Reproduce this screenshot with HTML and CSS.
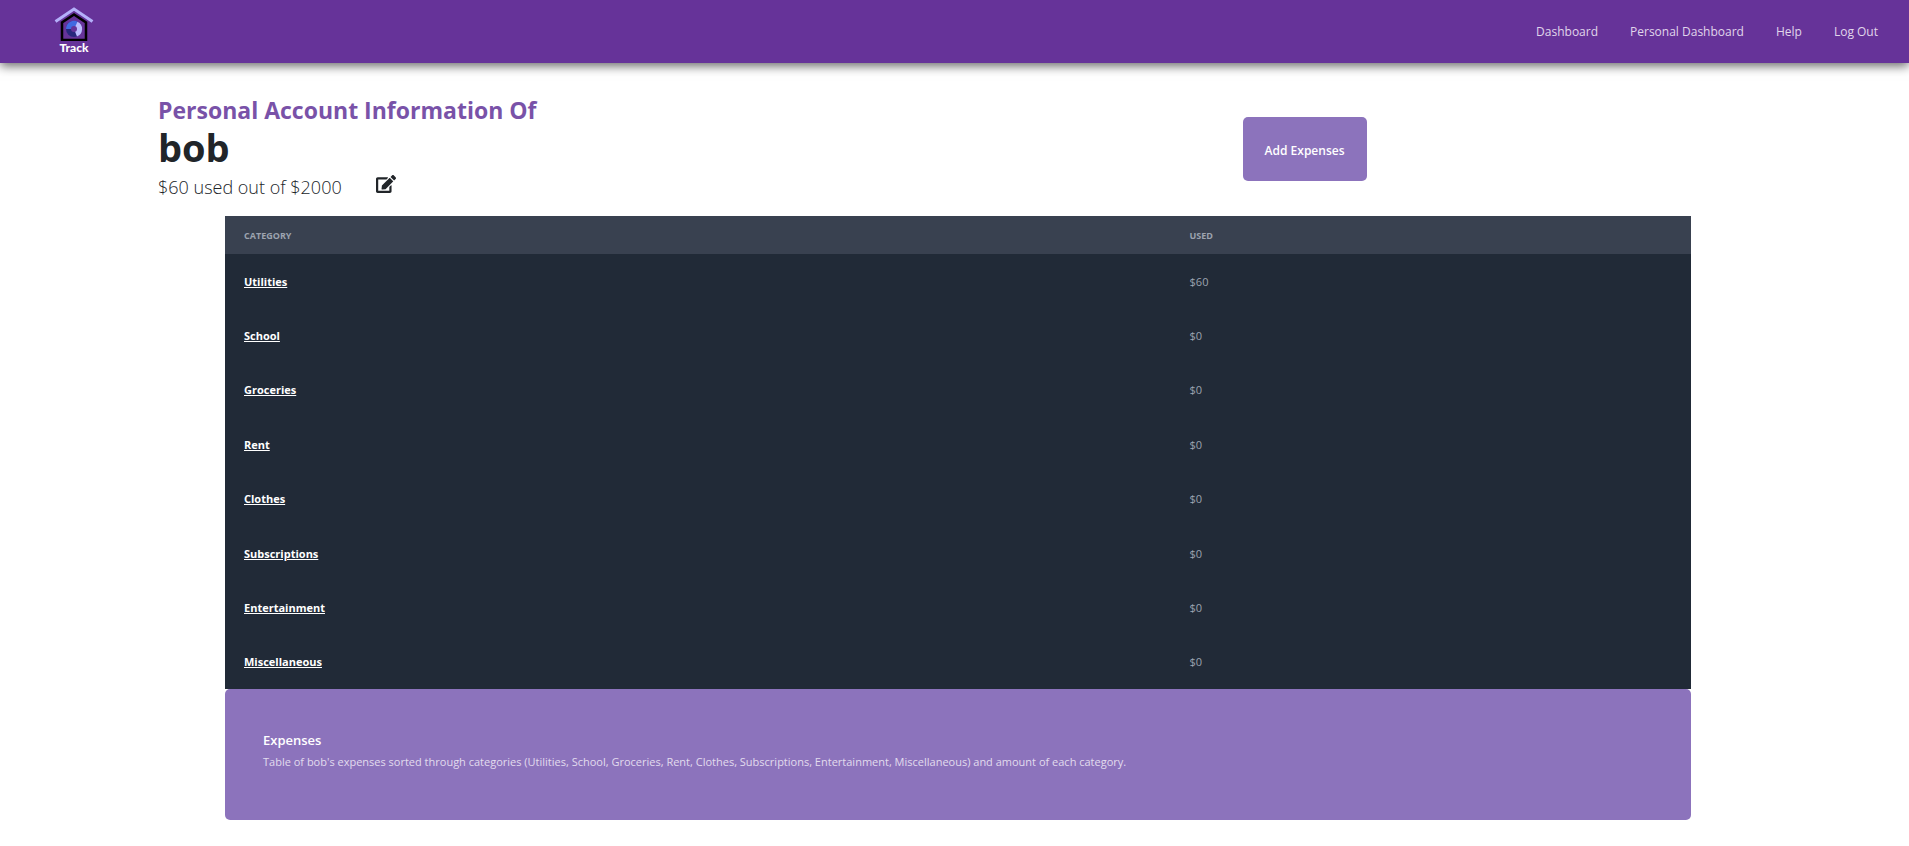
FILE: index.html
```html
<!DOCTYPE html>
<html lang="en">
<head>
    <meta charset="UTF-8">
    <meta name="viewport" content="width=device-width, initial-scale=1.0">
    <title>Track</title>
    <link rel="stylesheet" href="styles.css">
</head>
<body>
    <nav class="navbar">
        <a class="logo" href="#" aria-label="Track home">
            <svg width="40" height="36" viewBox="0 0 40 36" aria-hidden="true">
                <path d="M1.500 16.500 L20 4 L38.500 16.500" fill="none" stroke="#b4b0fa" stroke-width="3"/>
                <path d="M8 35 V17.500 L20 9.500 L32 17.500 V35 Z" fill="none" stroke="#000" stroke-width="2.500"/>
                <circle cx="20" cy="24" r="8" fill="#28287d"/>
                <path d="M20 24 L12 24 A8 8 0 0 1 24 17 Z" fill="#4169e1"/>
                <path d="M20 24 L23.500 16.800 A8 8 0 0 1 23 31.500 Z" fill="#bcbcff"/>
                <circle cx="20" cy="24" r="3" fill="#663399"/>
            </svg>
            <span class="logo-text">Track</span>
        </a>
        <ul class="nav-links">
            <li><a href="#">Dashboard</a></li>
            <li><a href="#">Personal Dashboard</a></li>
            <li><a href="#">Help</a></li>
            <li><a href="#">Log Out</a></li>
        </ul>
    </nav>

    <header class="account">
        <div class="account-info">
            <h2>Personal Account Information Of</h2>
            <h1>bob</h1>
            <div class="budget">
                <p>$60 used out of $2000</p>
                <button class="edit" aria-label="Edit budget">
                    <svg width="20" height="18" viewBox="0 0 576 512" aria-hidden="true">
                        <path fill="currentColor" d="M402.600 83.200l90.200 90.200c3.800 3.800 3.800 10 0 13.800L274.400 405.600l-92.800 10.300c-12.400 1.400-22.900-9.100-21.500-21.500l10.300-92.800L388.800 83.200c3.800-3.800 10-3.800 13.800 0zm162-22.900l-48.800-48.800c-15.200-15.200-39.900-15.200-55.200 0l-35.400 35.400c-3.800 3.800-3.800 10 0 13.800l90.200 90.200c3.800 3.800 10 3.800 13.800 0l35.400-35.400c15.200-15.300 15.200-40 0-55.200zM384 346.200V448H64V128h229.800c3.200 0 6.200-1.300 8.500-3.500l40-40c7.600-7.600 2.200-20.500-8.500-20.500H48C21.500 64 0 85.500 0 112v352c0 26.500 21.500 48 48 48h352c26.500 0 48-21.500 48-48V306.200c0-10.700-12.900-16-20.500-8.500l-40 40c-2.200 2.300-3.500 5.300-3.500 8.500z"/>
                    </svg>
                </button>
            </div>
        </div>
        <button class="add-button">Add Expenses</button>
    </header>

    <main class="expenses">
        <table>
            <thead>
                <tr>
                    <th class="category">Category</th>
                    <th>Used</th>
                </tr>
            </thead>
            <tbody>
                <tr><td><a href="#">Utilities</a></td><td>$60</td></tr>
                <tr><td><a href="#">School</a></td><td>$0</td></tr>
                <tr><td><a href="#">Groceries</a></td><td>$0</td></tr>
                <tr><td><a href="#">Rent</a></td><td>$0</td></tr>
                <tr><td><a href="#">Clothes</a></td><td>$0</td></tr>
                <tr><td><a href="#">Subscriptions</a></td><td>$0</td></tr>
                <tr><td><a href="#">Entertainment</a></td><td>$0</td></tr>
                <tr><td><a href="#">Miscellaneous</a></td><td>$0</td></tr>
            </tbody>
        </table>
        <section class="summary">
            <h3>Expenses</h3>
            <p>Table of bob's expenses sorted through categories (Utilities, School, Groceries, Rent, Clothes, Subscriptions, Entertainment, Miscellaneous) and amount of each category.</p>
        </section>
    </main>
</body>
</html>
```
FILE: styles.css
```css
* {
    box-sizing: border-box;
    margin: 0;
    padding: 0;
}
body {
    font-family: "Open Sans", "Noto Sans", sans-serif;
    color: #212529;
    background-color: #fff;
}
button {
    font-family: inherit;
    border: none;
    cursor: pointer;
}

/* navbar */
.navbar {
    display: flex;
    justify-content: space-between;
    align-items: center;
    height: 63px;
    padding: 0 31px 3px 54px;
    background-color: #663399;
    box-shadow: 0 3px 10px rgba(0, 0, 0, 0.6);
}
.logo {
    display: flex;
    flex-direction: column;
    align-items: center;
    text-decoration: none;
}
.logo-text {
    font-family: Lato, sans-serif;
    font-size: 12px;
    font-weight: 900;
    line-height: 14px;
    color: #fff;
}
.nav-links {
    display: flex;
    gap: 32px;
    list-style: none;
}
.nav-links a {
    font-size: 12px;
    color: #e0d6eb;
    text-decoration: none;
}

/* account */
.account {
    display: flex;
    align-items: flex-start;
    padding: 31px 156px 0 158px;
}
.account-info {
    width: 68%;
}
.account h2 {
    font-size: 23px;
    line-height: 32px;
    color: #7952a8;
}
.account h1 {
    font-size: 38px;
    line-height: 43px;
}
.budget {
    display: flex;
    gap: 34px;
    height: 34px;
}
.budget p {
    font-size: 18px;
    font-weight: 300;
    line-height: 36px;
}
.edit {
    display: flex;
    align-items: center;
    padding-bottom: 4px;
    color: #212529;
    background: none;
}
.add-button {
    margin-top: 23px;
    padding: 26px 22px 22px;
    font-size: 12px;
    font-weight: 600;
    line-height: 16px;
    color: #fff;
    background-color: #8c73bc;
    border-radius: 5px;
}

/* expenses table */
.expenses {
    margin: 13px 218px 26px 225px;
}
table {
    width: 100%;
    height: 473px;
    border-collapse: collapse;
    table-layout: fixed;
    background-color: #212a37;
}
th, td {
    padding: 0 19px;
    text-align: left;
    color: #9ca3af;
}
th {
    height: 38px;
    font-size: 9px;
    font-weight: 700;
    text-transform: uppercase;
    background-color: #394150;
}
.category {
    width: 64.5%;
}
td {
    font-size: 11px;
}
td a {
    font-weight: 700;
    color: #fff;
}
.summary {
    padding: 39px 38px 48px;
    color: #fff;
    background-color: #8c73bc;
    border-radius: 5px;
}
.summary h3 {
    font-size: 13px;
    font-weight: 600;
    line-height: 24px;
}
.summary p {
    font-size: 11px;
    line-height: 20px;
    color: #e2dcee;
}
```
